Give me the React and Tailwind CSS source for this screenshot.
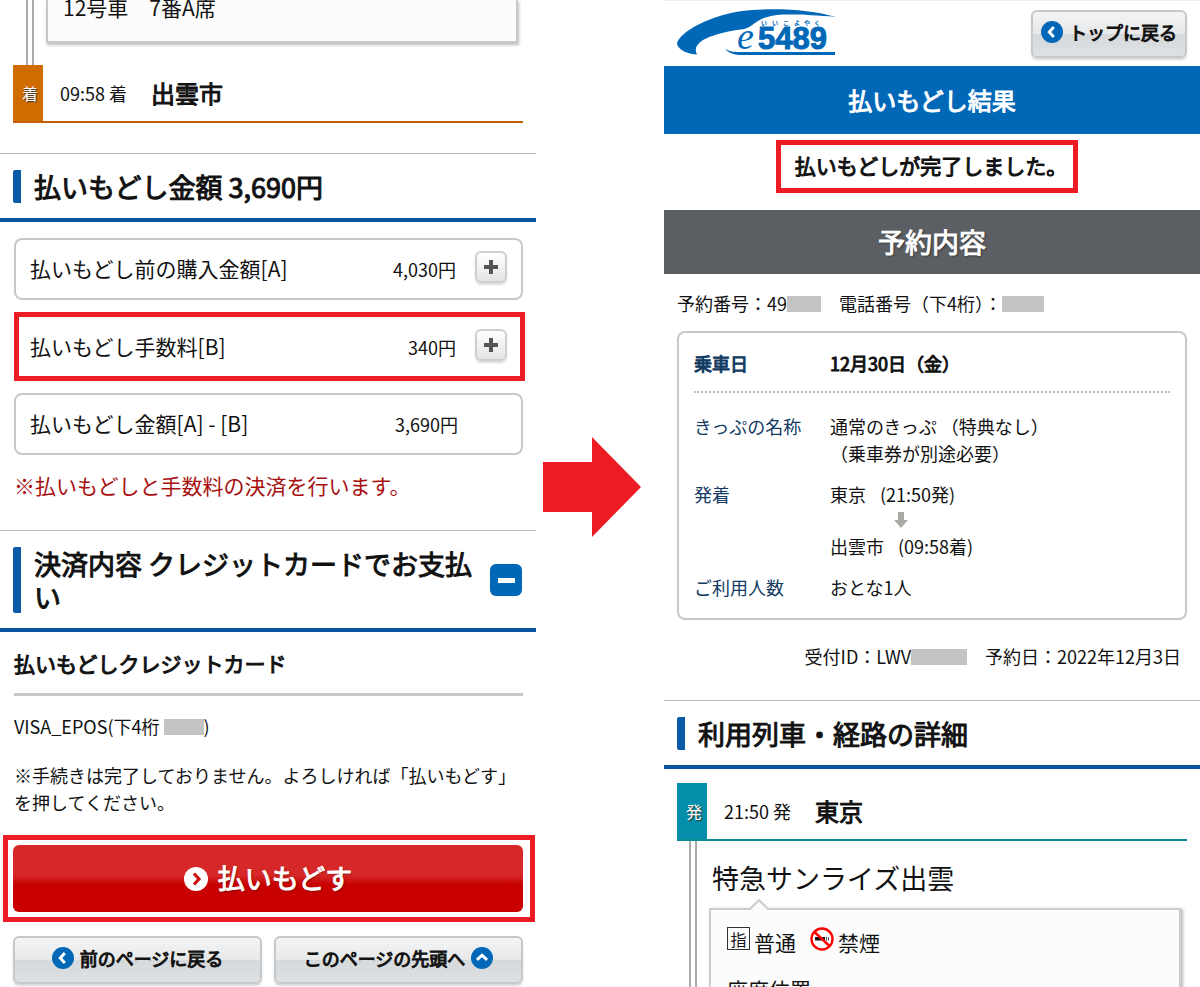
import React from "react";

const amountRows = [
    { id: 1, labelText: '払いもどし前の購入金額[A]', amount: '4,030円', useButton: true, highlight: false },
    { id: 2, labelText: '払いもどし手数料[B]', amount: '340円', useButton: true, highlight: true },
    { id: 3, labelText: '払いもどし金額[A] - [B]', amount: '3,690円', useButton: false, highlight: false },
];

const chevrons = {
    left: "M14 6.5L9 12L14 17.5",
    right: "M10 6.5L15 12L10 17.5",
    up: "M6.5 14L12 9L17.5 14",
};

// 太字は標準ウェイトに縁取りをつけて表示する
const boldText = "font-normal [-webkit-text-stroke:1px]";

function CircleIcon({direction, className, circle, stroke}) {
    return (
        <svg viewBox="0 0 24 24" className={className} aria-hidden="true">
            <circle cx="12" cy="12" r="12" fill={circle}/>
            <path d={chevrons[direction]} fill="none" stroke={stroke} strokeWidth="3.2"/>
        </svg>
    );
}

function GrayButton({children, className = ""}) {
    return (
        <button
            type="button"
            className={`flex h-12 items-center justify-center gap-[6px] rounded-md border-2 border-[#c6c8ca] bg-[linear-gradient(#f3f4f5,#e6e8ea_50%,#d5d9dc_50%,#dde1e4)] pb-1 text-lg shadow-[0_2px_2px_#d8d8d8] ${boldText} ${className}`}
        >
            {children}
        </button>
    );
}

// 伏せ字
function Mask({className}) {
    return <span className={`inline-block h-4 bg-[#c4c4c4] align-[-1px] ${className}`}/>;
}

function SectionHeading({children, button}) {
    return (
        <div className="flex items-center border-t border-b-4 border-t-[#bbb] border-b-[#0b55a0] pt-4 pr-[14px] pb-[15px] pl-[13px]">
            <h2 className={`flex-1 rounded-xs border-l-8 border-[#0b5ba8] pl-[13px] text-[27px] leading-[33px] ${boldText}`}>
                {children}
            </h2>
            {button}
        </div>
    );
}

function StationRow({mark, time, name, boxClass, lineClass}) {
    return (
        <div className={`flex h-[58px] items-center border-b-2 ${lineClass}`}>
            <span className={`flex w-[30px] items-center justify-center self-stretch pl-1 text-base text-white [text-shadow:1px_1px_1px_#333] ${boxClass}`}>
                {mark}
            </span>
            <span className="ml-[17px] text-lg">{time}</span>
            <strong className={`ml-6 text-2xl ${boldText}`}>{name}</strong>
        </div>
    );
}

function AmountRow({row}) {
    const rowClass = row.highlight
        ? "-mr-[2px] h-[69px] border-[5px] border-[#ed1c24] pl-[11px] pr-[13px]"
        : "h-[62px] rounded-lg border-2 border-[#c8c8c8] px-[14px]";
    return (
        <li className={`flex items-center ${rowClass}`}>
            <span className="flex-1 text-[21px]">{row.labelText}</span>
            <span className="text-lg">{row.amount}</span>
            {row.useButton ? (
                <button
                    type="button"
                    aria-label="開く"
                    className="mb-1 ml-[19px] flex size-8 items-center justify-center rounded-md border-2 border-[#cfcfcf] bg-linear-to-b from-white to-[#e4e4e4] shadow-[0_2px_2px_#ddd]"
                >
                    <svg viewBox="0 0 14 14" className="size-[14px]" aria-hidden="true">
                        <path d="M7 0V14M0 7H14" stroke="#555" strokeWidth="4"/>
                    </svg>
                </button>
            ) : (
                <span className="ml-[17px] w-8"/>
            )}
        </li>
    );
}

function Logo() {
    return (
        <svg viewBox="0 0 162 50" className="h-[50px] w-[162px]" role="img" aria-label="e5489">
            <path
                d="M20 45.500C12 45 2 42 0 35C1 24 34 4 75 1C105 -1 135 1 159 8C135 6 115 5 100 6C86 8 82 11 78 14C74 17 70 20 64 20.500C38 24 13 32 20 45.500Z"
                fill="#0068b7"
            />
            <path d="M48 40C54 43 57 43 64 43H158V46H66C57 46 52 44 48 40Z" fill="#0068b7"/>
            <text x="60" y="40" fontSize="38" fontStyle="italic" fontFamily="Liberation Serif, serif" fill="#0068b7">e</text>
            <text
                x="81" y="40" fontSize="31" fontWeight="bold" fontFamily="Liberation Sans, sans-serif"
                fill="#0068b7" stroke="#0068b7" strokeWidth="1"
            >
                5489
            </text>
            <text
                x="84 95 106 117 127 137" y="16" fontSize="6" fontWeight="bold"
                fontFamily="Noto Sans CJK JP, sans-serif" fill="#0068b7"
            >
                いいこよやく
            </text>
        </svg>
    );
}

function NoSmokingIcon() {
    return (
        <svg viewBox="0 0 24 24" className="size-6" aria-hidden="true">
            <circle cx="12" cy="12" r="10.500" fill="#fff" stroke="#f00" strokeWidth="2.400"/>
            <path d="M5 10H15V13.500H5Z" fill="#111"/>
            <path d="M16 10H17V13.500H16ZM18 10H19V13.500H18Z" fill="#555"/>
            <path d="M4.500 5L19.500 19" stroke="#f00" strokeWidth="2.400"/>
        </svg>
    );
}

// 払いもどし前
function RefundConfirm() {
    return (
        <section>
            <div className="ml-[26px] h-[65px] border-l-2 border-[#aaa]">
                <div className="ml-1 h-full border-l-2 border-[#aaa] pl-3">
                    <p className="mr-[18px] h-[43px] border-2 border-t-0 border-[#c8c8c8] bg-[#fcfcfc] pl-[15px] text-[21px] leading-[14px] shadow-[1px_2px_3px_#bbb]">
                        12号車　7番A席
                    </p>
                </div>
            </div>
            <div className="pr-[13px] pl-[13px]">
                <StationRow mark="着" time="09:58 着" name="出雲市" boxClass="bg-[#d06b00]" lineClass="border-[#c45f00]"/>
            </div>

            <div className="mt-[30px]">
                <SectionHeading>払いもどし金額 3,690円</SectionHeading>
            </div>
            <ul className="mt-4 flex flex-col gap-3 pr-[13px] pl-[14px]">
                {amountRows.map((row) => (
                    <AmountRow key={row.id} row={row}/>
                ))}
            </ul>
            <p className="mt-[15px] mb-[30px] pl-[14px] text-[21px] leading-[30px] text-[#a81010]">
                ※払いもどしと手数料の決済を行います。
            </p>

            <SectionHeading
                button={
                    <button type="button" aria-label="閉じる" className="ml-4 flex size-8 items-center justify-center rounded-md bg-[#0068b7]">
                        <span className="h-[5px] w-[17px] bg-white"/>
                    </button>
                }
            >
                決済内容 クレジットカードでお支払い
            </SectionHeading>
            <div className="pr-[13px] pl-[14px]">
                <h3 className={`mt-[18px] border-b-[3px] border-[#c8c8c8] pb-4 text-[21px] leading-[27px] ${boldText}`}>
                    払いもどしクレジットカード
                </h3>
                <p className="mt-[17px] text-lg leading-[27px]">
                    VISA_EPOS(下4桁 <Mask className="w-10"/>)
                </p>
                <p className="mt-[22px] text-lg leading-[27px]">
                    ※手続きは完了しておりません。よろしければ「払いもどす」を押してください。
                </p>
            </div>

            <div className="mt-[19px] mr-px ml-[3px] border-[5px] border-[#ed1c24] py-[5px] pr-[7px] pl-[5px]">
                <button
                    type="button"
                    className={`flex h-[67px] w-full items-center justify-center gap-[10px] rounded-md bg-[linear-gradient(#d62828,#d62828_45%,#c80000_60%,#c80000)] text-[27px] text-white [text-shadow:1px_1px_2px_#600] ${boldText}`}
                >
                    <CircleIcon direction="right" className="size-6" circle="#fff" stroke="#cc0f0f"/>
                    払いもどす
                </button>
            </div>
            <div className="mt-[14px] grid grid-cols-2 gap-3 pr-[13px] pl-[13px]">
                <GrayButton>
                    <CircleIcon direction="left" className="size-[22px]" circle="#0068b7" stroke="#fff"/>
                    前のページに戻る
                </GrayButton>
                <GrayButton>
                    このページの先頭へ
                    <CircleIcon direction="up" className="size-[22px]" circle="#0068b7" stroke="#fff"/>
                </GrayButton>
            </div>
        </section>
    );
}

// 払いもどし後
function RefundResult() {
    return (
        <section>
            <header className="flex h-[66px] items-center justify-between border-t border-[#eee] pr-[13px] pl-[13px]">
                <Logo/>
                <GrayButton className="w-[156px]">
                    <CircleIcon direction="left" className="size-[22px]" circle="#0068b7" stroke="#fff"/>
                    トップに戻る
                </GrayButton>
            </header>
            <h1 className={`flex h-[68px] items-center justify-center bg-[#0068b7] text-2xl text-white ${boldText}`}>
                払いもどし結果
            </h1>
            <p className={`mt-[6px] mr-[122px] ml-[112px] flex h-[53px] items-center justify-center border-[5px] border-[#ed1c24] pb-px pl-2 text-[21px] ${boldText}`}>
                払いもどしが完了しました。
            </p>
            <h2 className={`mt-[17px] flex h-16 items-center justify-center bg-[#5b5f63] text-[27px] text-white [text-shadow:1px_1px_2px_#222] ${boldText}`}>
                予約内容
            </h2>

            <div className="pr-[13px] pl-[13px]">
                <p className="mt-4 text-lg leading-[27px]">
                    予約番号：49<Mask className="w-[34px]"/>
                    <span className="ml-[18px]">電話番号（下4桁）：</span>
                    <Mask className="w-[42px]"/>
                </p>
                <dl className="mt-[14px] grid grid-cols-[136px_1fr] gap-y-[14px] rounded-lg border-2 border-[#c8c8c8] px-[15px] py-[17px] text-lg leading-[27px]">
                    <dt className={`text-[#123a63] ${boldText}`}>乗車日</dt>
                    <dd className={boldText}>12月30日（金）</dd>
                    <div className="col-span-2 mb-[6px] border-t-2 border-dotted border-[#bbb]"/>
                    <dt className="text-[#123a63]">きっぷの名称</dt>
                    <dd>
                        通常のきっぷ （特典なし）
                        <br/>
                        （乗車券が別途必要）
                    </dd>
                    <dt className="text-[#123a63]">発着</dt>
                    <dd>
                        東京<span className="ml-[14px]">(21:50発)</span>
                        <svg viewBox="0 0 14 16" className="mt-1 mb-[5px] ml-16 h-4 w-[14px]" aria-hidden="true">
                            <path d="M4 0H10V8H14L7 16L0 8H4Z" fill="#aaaaa5"/>
                        </svg>
                        出雲市<span className="ml-[14px]">(09:58着)</span>
                    </dd>
                    <dt className="text-[#123a63]">ご利用人数</dt>
                    <dd>おとな1人</dd>
                </dl>
                <p className="mt-[23px] mb-[30px] pr-[6px] text-right text-lg leading-[27px]">
                    受付ID：LWV<Mask className="w-14"/>
                    <span className="ml-[18px]">予約日：2022年12月3日</span>
                </p>
            </div>

            <SectionHeading>利用列車・経路の詳細</SectionHeading>
            <div className="mt-[14px] pr-[13px] pl-[13px]">
                <StationRow mark="発" time="21:50 発" name="東京" boxClass="bg-[#058ea9]" lineClass="border-[#0a8a93]"/>
                <div className="ml-3 border-l-2 border-[#aaa]">
                    <div className="ml-1 border-l-2 border-[#aaa] pl-3">
                        <h3 className="pt-[17px] pl-[3px] text-[27px] leading-10">特急サンライズ出雲</h3>
                        <div className="relative mt-[10px] mr-[6px] border-2 border-[#ccc] bg-[#fcfcfc] pt-[17px] pb-10 pl-4 text-[21px] leading-[30px] shadow-[2px_1px_3px_#bbb]">
                            <svg viewBox="0 0 20 11" className="absolute -top-[11px] left-[38px] h-[11px] w-5" aria-hidden="true">
                                <path d="M0 11L10 1L20 11" fill="#fcfcfc" stroke="#ccc" strokeWidth="2"/>
                            </svg>
                            <p className="flex items-start">
                                <span className="flex size-[23px] items-center justify-center border border-[#333] text-base">指</span>
                                <span className="ml-1">普通</span>
                                <span className="ml-[14px]"><NoSmokingIcon/></span>
                                <span className="ml-1">禁煙</span>
                            </p>
                            <p className="mt-[17px]">座席位置</p>
                        </div>
                    </div>
                </div>
            </div>
        </section>
    );
}

export default function App() {
    return (
        <main className="grid h-screen grid-cols-[minmax(0,536fr)_minmax(0,128fr)_minmax(0,536fr)] overflow-hidden bg-white font-['Noto_Sans_CJK_JP',sans-serif] text-[#111]">
            <RefundConfirm/>
            <div className="flex h-screen items-center pb-[14px] pl-[7px]">
                <svg viewBox="0 0 98 100" className="h-[100px] w-[98px]" aria-hidden="true">
                    <path d="M0 25H49V0L98 50L49 100V75H0Z" fill="#ed1c24"/>
                </svg>
            </div>
            <RefundResult/>
        </main>
    );
}
